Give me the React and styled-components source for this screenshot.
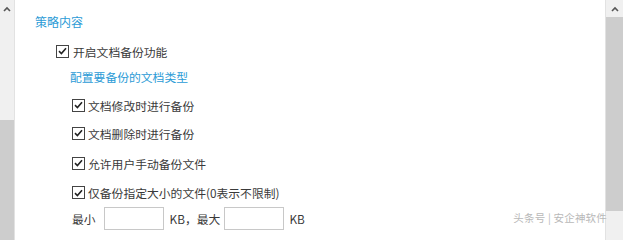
import styled, { createGlobalStyle } from "styled-components";

const Global = createGlobalStyle`
  html, body { margin: 0; padding: 0; background: #fff; }
  body {
    font-family: "Noto Sans CJK SC", "Microsoft YaHei", "Liberation Sans", sans-serif;
    font-size: 11.8px;
    color: #3a3a3a;
  }
`;

const Frame = styled.div`
  position: relative;
  display: flex;
  width: 623px;
  height: 240px;
  overflow: hidden;
`;

const ScrollBar = styled.div`
  display: flex;
  flex-direction: column;
  flex: 0 0 ${(p) => p.width}px;
  background: #f0f0f0;
  border-${(p) => (p.side === "left" ? "right" : "left")}: 1px solid #e2e2e2;
`;

const Arrow = styled.div`
  height: ${(p) => p.h}px;
  display: flex;
  justify-content: center;
  padding-top: 6px;
  box-sizing: border-box;
`;

const Track = styled.div`
  flex: ${(p) => (p.grow ? 1 : `0 0 ${p.h}px`)};
  background: ${(p) => (p.thumb ? "#cdcdcd" : "#f0f0f0")};
`;

const Content = styled.div`
  flex: 1;
  padding-left: 20px;
  display: flex;
  flex-direction: column;
`;

const Heading = styled.div`
  display: flex;
  align-items: center;
  height: ${(p) => p.h}px;
  padding-left: ${(p) => p.indent || 0}px;
  color: #2b9bd6;
  font-size: ${(p) => p.size || 11.8}px;
`;

const Row = styled.label`
  display: flex;
  align-items: center;
  height: ${(p) => p.h}px;
  padding-left: ${(p) => p.indent}px;
  gap: ${(p) => p.gap || 4}px;
  white-space: nowrap;
`;

const Box = styled.span`
  width: 11px;
  height: 11px;
  border: 1px solid #444;
  background: #fff;
  display: flex;
  align-items: center;
  justify-content: center;
  flex: 0 0 auto;
`;

const SizeInput = styled.input`
  width: 60px;
  height: 23px;
  box-sizing: border-box;
  border: 1px solid #c8c8c8;
  margin: 0 ${(p) => p.mr}px 0 ${(p) => p.ml}px;
  padding: 0 4px;
  font: inherit;
  outline: none;
`;

const Watermark = styled.div`
  position: absolute;
  right: 16px;
  bottom: 15px;
  font-size: 10.5px;
  color: #b8b8b8;
  letter-spacing: 0.2px;
  text-shadow: 0 0 1px #fff;
`;

const Chevron = () => (
  <svg width="8" height="6" viewBox="0 0 8 6">
    <path d="M1 5 L4 2 L7 5" fill="none" stroke="#555" strokeWidth="1.6" />
  </svg>
);

const Check = () => (
  <Box>
    <svg width="9" height="8" viewBox="0 0 9 8">
      <path d="M1 4.2 L3.4 6.5 L8 1.2" fill="none" stroke="#222" strokeWidth="1.6" />
    </svg>
  </Box>
);

const items = [
  { text: "文档修改时进行备份", h: 26 },
  { text: "文档删除时进行备份", h: 30 },
  { text: "允许用户手动备份文件", h: 30 },
  { text: "仅备份指定大小的文件(0表示不限制)", h: 29 },
];

export default function App() {
  return (
    <>
      <Global />
      <Frame>
        <ScrollBar width={14} side="left">
          <Arrow h={120}>
            <Chevron />
          </Arrow>
          <Track thumb grow />
        </ScrollBar>
        <Content>
          <Heading h={42} size={12}>策略内容</Heading>
          <Row h={18} indent={21}>
            <Check />
            开启文档备份功能
          </Row>
          <Heading h={32} indent={35}>配置要备份的文档类型</Heading>
          {items.map((it) => (
            <Row key={it.text} h={it.h} indent={37} gap={3}>
              <Check />
              {it.text}
            </Row>
          ))}
          <Row as="div" h={22} indent={37} gap={0}>
            最小
            <SizeInput ml={4} mr={2} />
            KB，最大
            <SizeInput ml={0} mr={1} />
            KB
          </Row>
        </Content>
        <ScrollBar width={17} side="right">
          <Arrow h={17}>
            <Chevron />
          </Arrow>
          <Track thumb h={194} />
          <Track grow />
        </ScrollBar>
        <Watermark>头条号 | 安企神软件</Watermark>
      </Frame>
    </>
  );
}
